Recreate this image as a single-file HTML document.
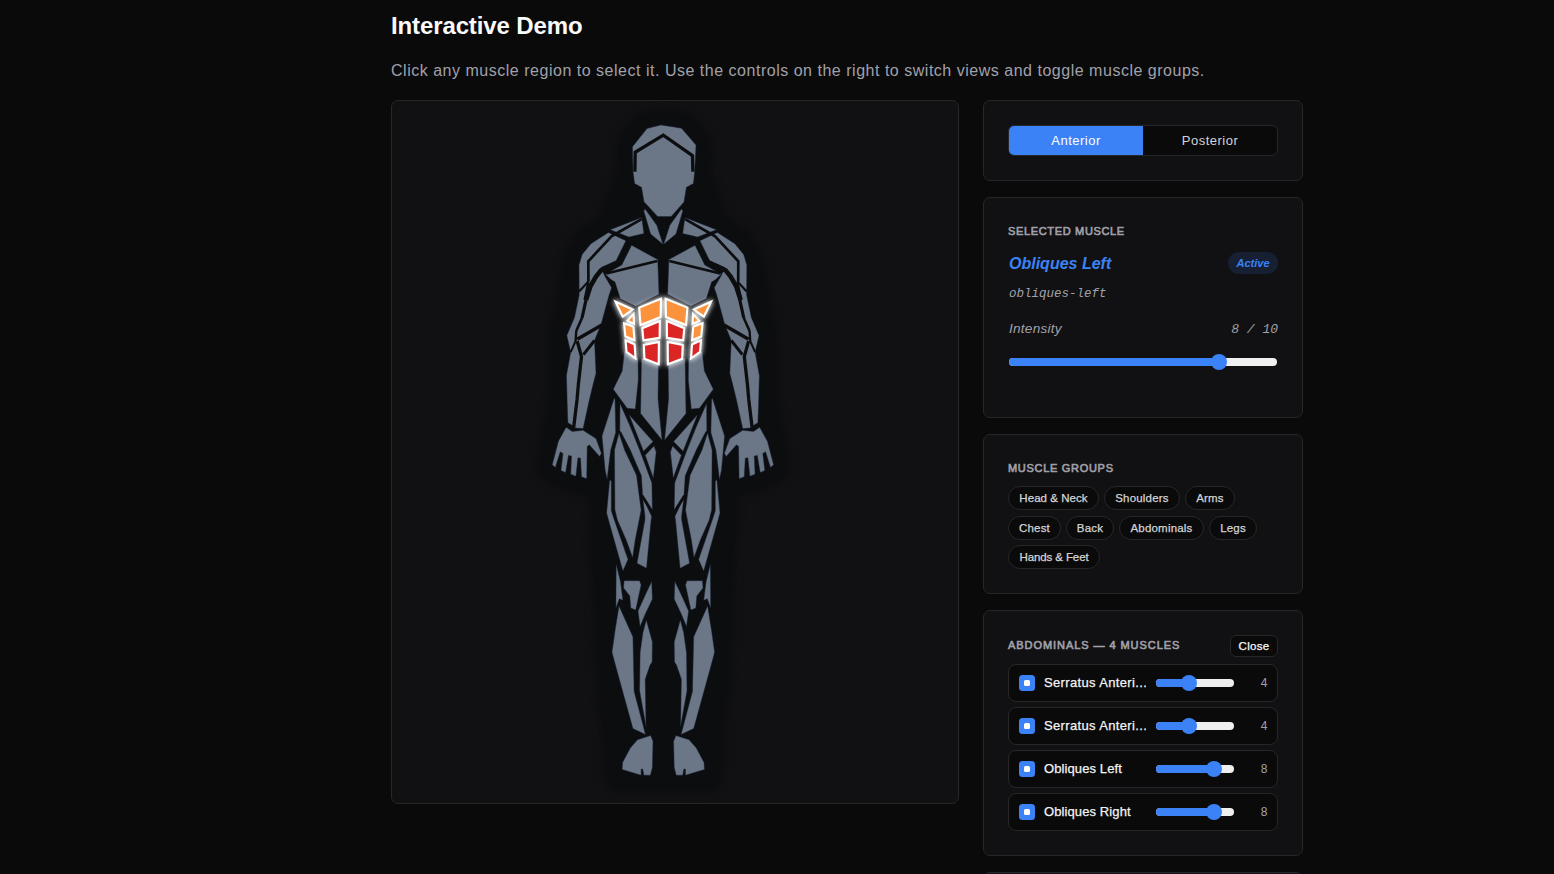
<!DOCTYPE html>
<html lang="en">
<head>
<meta charset="utf-8">
<title>Interactive Demo</title>
<style>
*{box-sizing:border-box;margin:0;padding:0}
html,body{width:1554px;height:874px;overflow:hidden;background:#0a0a0a;color:#fafafa;font-family:"Liberation Sans",sans-serif}
body{position:relative}
h2{position:absolute;left:391px;top:11px;font-size:24px;line-height:30px;font-weight:700;color:#fafafa;letter-spacing:-0.12px;white-space:nowrap}
.sub{position:absolute;left:391px;top:60px;font-size:16px;line-height:22px;color:#a1a1aa;white-space:nowrap;letter-spacing:0.515px}
.card{position:absolute;background:#111113;border:1px solid #27272a;border-radius:7px}
#viewer{left:391px;top:100px;width:568px;height:704px;overflow:hidden}
#c1{left:983px;top:100px;width:320px;height:81px}
#c2{left:983px;top:197px;width:320px;height:221px}
#c3{left:983px;top:434px;width:320px;height:160px}
#c4{left:983px;top:610px;width:320px;height:246px}
#c5{left:983px;top:872px;width:320px;height:100px}
.abs{position:absolute;white-space:nowrap}
.seg{position:absolute;left:24px;top:24px;width:270px;height:31px;border:1px solid #27272a;border-radius:6px;background:#0a0a0a;overflow:hidden}
.seg div{position:absolute;top:0;height:29px;text-align:center;font-size:13px;line-height:29px;color:#d4d4d8;letter-spacing:0.5px}
.seg .on{left:0;width:134px;background:#3b82f6;color:#fff}
.seg .off{left:134px;width:134px}
.lbl{position:absolute;left:24px;font-size:11px;font-weight:400;-webkit-text-stroke:0.6px #a1a1aa;letter-spacing:0.6px;color:#a1a1aa;white-space:nowrap;line-height:14px}
.mname{left:25px;top:253px;font-size:16px;line-height:20px;font-weight:700;font-style:italic;color:#3b82f6}
.badge{left:244px;top:54px;width:50px;height:22px;border-radius:11px;background:#172033;color:#3b82f6;font-size:11px;font-weight:700;font-style:italic;text-align:center;line-height:22px}
.mono{font-family:"Liberation Mono",monospace;font-style:italic;color:#a1a1aa}
.track{position:absolute;height:8px;border-radius:4px;background:#efefef}
.track i{position:absolute;left:0;top:0;height:8px;border-radius:4px;background:#3b82f6}
.track b{position:absolute;top:-4px;width:16px;height:16px;border-radius:50%;background:#3b82f6}
.chip{-webkit-text-stroke:0.25px #d4d4d8;position:absolute;height:24px;border:1px solid #27272a;border-radius:12px;background:#0a0a0a;color:#d4d4d8;font-size:11.5px;line-height:22px;text-align:center;white-space:nowrap;letter-spacing:0.2px}
.close{-webkit-text-stroke:0.25px #fafafa;left:246px;top:24px;width:48px;height:22px;border:1px solid #27272a;border-radius:6px;background:#0a0a0a;color:#fafafa;font-size:11.5px;line-height:20.5px;text-align:center;letter-spacing:0.3px}
.row{position:absolute;left:24px;width:270px;height:38px;border:1px solid #27272a;border-radius:8px;background:#0a0a0a}
.row .cb{position:absolute;left:10px;top:10px;width:16px;height:16px;border-radius:3.5px;background:#3b82f6}
.row .cb:after{content:"";position:absolute;left:5px;top:5px;width:6px;height:6px;border-radius:1.5px;background:#fff}
.row .nm{-webkit-text-stroke:0.25px #f4f4f5;position:absolute;left:35px;top:0;width:102px;line-height:36px;font-size:13px;color:#f4f4f5;white-space:nowrap;overflow:hidden;letter-spacing:0.35px}
.row .track{left:147px;top:14px;width:78px}
.row .num{position:absolute;left:245px;width:20px;top:0;line-height:36px;font-size:12px;color:#a1a1aa;text-align:center}
</style>
</head>
<body>
<h2>Interactive Demo</h2>
<p class="sub">Click any muscle region to select it. Use the controls on the right to switch views and toggle muscle groups.</p>
<div class="card" id="viewer"><!--FIGURE--><svg viewBox="0 0 1554 874" width="1554" height="874" style="position:absolute;left:-392px;top:-101px">
<defs><filter id="halo" color-interpolation-filters="sRGB" x="-20%" y="-10%" width="140%" height="120%"><feGaussianBlur stdDeviation="3.5"/></filter><filter id="glow" color-interpolation-filters="sRGB" x="-30%" y="-30%" width="160%" height="160%"><feGaussianBlur stdDeviation="2.6"/></filter></defs>
<g filter="url(#halo)" fill="#0c0d0f" stroke="#0c0d0f" stroke-width="34" stroke-linejoin="round">
<polygon points="661,124.9 647,128.6 632.5,146.7 633,171.8 634.6,183.5 641.5,187.3 644,201.7 657.6,216.5 671.2,216.5 684,202.1 686.4,187.3 693.4,183.5 694.7,171.8 696,145.1 681.5,128.2"/>
<polygon points="644.94,208.75 656.78,225.23 662.96,244.27 650.6,233.98 643.91,211.33"/>
<polygon points="641.03,217.71 610.24,229.65 619.2,233.15 628.98,237.07 643.91,233.46 642.06,220.08"/>
<polygon points="608.4,232.4 625.9,240.7 616.1,260.7 601,267.5 604.5,275.5 611.6,287.7 609.1,295 601.7,322.2 601.1,324 598.8,330 594.5,340.5 596,373.2 593.2,384 589.3,400 583.1,428.6 575.4,428 572,425.2 567.9,422.7 567.1,400 566.7,384 566.4,375.7 570.7,352.2 566.8,335.5 574.5,317.4 579.2,295 579,264.9 582.1,254.6 590.9,243.8"/>
<polygon points="566.11,427.28 572.28,431.4 583.1,430.37 595.97,438.61 601.42,453.33 599.57,456.42 589.27,444.79 587.21,446.54 586.7,478.76 581.55,476.71 580.52,458.17 577.95,457.66 575.89,476.19 570.74,474.13 571.56,456.11 568.47,455.39 565.59,472.59 560.96,470.53 563.02,453.54 560.24,451.79 555.3,467.44 552.21,464.86 558.38,441.18"/>
<polygon points="631.6,245.3 657.7,259.5 659,294.3 635.6,306.3 620.2,298.6 615,282.1 611,279.6 605.4,274.2 621.8,264.9"/>
<polygon points="624.5,351 622.2,371 613.3,389.3 627.2,408.3 635.3,409 638.3,380 638,358 632,355"/>
<polygon points="641.5,358 658.5,362 658,398.5 662,440 640.6,413.5"/>
<polygon points="614.1,398.5 602,436.1 605.1,470 607.1,479.3 610.7,450 615.7,432.5 615,399"/>
<polygon points="609.7,479.9 606.6,512.8 608.5,520 622.9,571 628,559.6 614.3,520 611.3,510.7 611.3,481"/>
<polygon points="619,433 624.6,450 636.5,475.2 641.1,510.2 635.2,540 632.6,557.6 626.2,540 617.4,520 614.9,509.7 614.5,450"/>
<polygon points="620,403.5 619.8,430.7 621,432 630.3,450 641.4,475.7 642.7,496.3 652.4,510.7 651.9,482.9 640,451 630,426"/>
<polygon points="629.1,414.8 653,441.6 643.5,451.2"/>
<polygon points="645.2,455.2 654,445.9 656.2,452 653.3,478"/>
<polygon points="642.7,497.4 651.7,516.4 651.1,520 646.5,568.2 637,563.2 644.9,520 645,516.4"/>
<polygon points="616.2,564.3 620.5,581.8 622.9,600.3 619.3,598.8 615.9,608"/>
<polygon points="624.1,580.7 639.6,580.7 641.1,584.9 635.7,610.1 630.8,608 629.8,596 623.6,588"/>
<polygon points="651.7,581.6 652.4,599 645.2,614.2 640.1,626.6 638,611.1 646.6,592.1"/>
<polygon points="619,606 632.9,636.8 633.9,680 634.1,691.3 645.5,734.5 632.9,728.6 615.4,665 612,652.3 615.1,630.2"/>
<polygon points="646.3,619.9 652.4,642 652.1,662.1 650.1,665 645.2,679.2 646,726.3 639.6,690.7 640.1,652.8 642.9,632.7"/>
<polygon points="650.7,735.6 653,741.3 652.4,767.5 650.4,775.2 643.9,775.2 642.7,769.1 641.1,769.1 641.1,775.2 622.1,769.4 622.6,762.4 630.3,747.9 637.5,739.7"/>
<polygon points="681.66,208.75 669.82,225.23 663.64,244.27 676.0,233.98 682.69,211.33"/>
<polygon points="685.57,217.71 716.36,229.65 707.4,233.15 697.62,237.07 682.69,233.46 684.54,220.08"/>
<polygon points="717.4,232.4 699.9,240.7 709.7,260.7 724.8,267.5 721.3,275.5 714.2,287.7 716.7,295 724.1,322.2 724.7,324 727.0,330 731.3,340.5 729.8,373.2 732.6,384 736.5,400 742.7,428.6 750.4,428 753.8,425.2 757.9,422.7 758.7,400 759.1,384 759.4,375.7 755.1,352.2 759.0,335.5 751.3,317.4 746.6,295 746.8,264.9 743.7,254.6 734.9,243.8"/>
<polygon points="759.69,427.28 753.52,431.4 742.7,430.37 729.83,438.61 724.38,453.33 726.23,456.42 736.53,444.79 738.59,446.54 739.1,478.76 744.25,476.71 745.28,458.17 747.85,457.66 749.91,476.19 755.06,474.13 754.24,456.11 757.33,455.39 760.21,472.59 764.84,470.53 762.78,453.54 765.56,451.79 770.5,467.44 773.59,464.86 767.42,441.18"/>
<polygon points="695.0,245.3 668.9,259.5 667.6,294.3 691.0,306.3 706.4,298.6 711.6,282.1 715.6,279.6 721.2,274.2 704.8,264.9"/>
<polygon points="702.1,351 704.4,371 713.3,389.3 699.4,408.3 691.3,409 688.3,380 688.6,358 694.6,355"/>
<polygon points="685.1,358 668.1,362 668.6,398.5 664.6,440 686.0,413.5"/>
<polygon points="712.5,398.5 724.6,436.1 721.5,470 719.5,479.3 715.9,450 710.9,432.5 711.6,399"/>
<polygon points="716.9,479.9 720.0,512.8 718.1,520 703.7,571 698.6,559.6 712.3,520 715.3,510.7 715.3,481"/>
<polygon points="707.6,433 702.0,450 690.1,475.2 685.5,510.2 691.4,540 694.0,557.6 700.4,540 709.2,520 711.7,509.7 712.1,450"/>
<polygon points="706.6,403.5 706.8,430.7 705.6,432 696.3,450 685.2,475.7 683.9,496.3 674.2,510.7 674.7,482.9 686.6,451 696.6,426"/>
<polygon points="697.5,414.8 673.6,441.6 683.1,451.2"/>
<polygon points="681.4,455.2 672.6,445.9 670.4,452 673.3,478"/>
<polygon points="683.9,497.4 674.9,516.4 675.5,520 680.1,568.2 689.6,563.2 681.7,520 681.6,516.4"/>
<polygon points="710.4,564.3 706.1,581.8 703.7,600.3 707.3,598.8 710.7,608"/>
<polygon points="702.5,580.7 687.0,580.7 685.5,584.9 690.9,610.1 695.8,608 696.8,596 703.0,588"/>
<polygon points="674.9,581.6 674.2,599 681.4,614.2 686.5,626.6 688.6,611.1 680.0,592.1"/>
<polygon points="707.6,606 693.7,636.8 692.7,680 692.5,691.3 681.1,734.5 693.7,728.6 711.2,665 714.6,652.3 711.5,630.2"/>
<polygon points="680.3,619.9 674.2,642 674.5,662.1 676.5,665 681.4,679.2 680.6,726.3 687.0,690.7 686.5,652.8 683.7,632.7"/>
<polygon points="675.9,735.6 673.6,741.3 674.2,767.5 676.2,775.2 682.7,775.2 683.9,769.1 685.5,769.1 685.5,775.2 704.5,769.4 704.0,762.4 696.3,747.9 689.1,739.7"/>
<polygon points="602,436 606,520 612,652 620,775 706.6,775 714.6,652 720.6,520 724.6,436"/>
<polygon points="634,175 611,229 591,243 663,255"/>
<polygon points="692.6,175 715.6,229 735.6,243 663.6,255"/>
<polygon points="590,243 579,265 566,335 566,400 552,465 587,479 601,453 596,373 612,288 626,241"/>
<polygon points="736.6,243 747.6,265 760.6,335 760.6,400 774.6,465 739.6,479 725.6,453 730.6,373 714.6,288 700.6,241"/>
</g>
<polygon points="645,208 641,218 610.5,229.7 590.9,243.8 582.1,254.6 579,264.9 579.2,295 574.5,317.4 566.8,335.5 570.7,352.2 566.4,375.7 567.1,400 567.9,422.7 566.1,427.3 558.4,441.2 552.2,464.9 586.7,478.8 601.4,453.3 602,436.1 605,470 606.6,512.8 608.5,520 616.2,564 615.9,608 615.1,630 612,652 615.4,665 632.9,728.6 630.3,747.9 622.6,762.4 622.1,769.4 641.1,775.2 650.4,775.2 676.2,775.2 685.5,775.2 704.5,769.4 704.0,762.4 696.3,747.9 693.7,728.6 711.2,665 714.6,652 711.5,630 710.7,608 710.4,564 718.1,520 720.0,512.8 721.6,470 724.6,436.1 725.2,453.3 739.9,478.8 774.4,464.9 768.2,441.2 760.5,427.3 758.7,422.7 759.5,400 760.2,375.7 755.9,352.2 759.8,335.5 752.1,317.4 747.4,295 747.6,264.9 744.5,254.6 735.7,243.8 716.1,229.7 685.6,218 681.6,208" fill="#0c0d0f"/>
<g fill="#6b7686" stroke="#17233a" stroke-width="0.45">
<polygon points="661,124.9 647,128.6 632.5,146.7 633,171.8 634.6,183.5 641.5,187.3 644,201.7 657.6,216.5 671.2,216.5 684,202.1 686.4,187.3 693.4,183.5 694.7,171.8 696,145.1 681.5,128.2"/>
<polygon points="644.94,208.75 656.78,225.23 662.96,244.27 650.6,233.98 643.91,211.33"/>
<polygon points="641.03,217.71 610.24,229.65 619.2,233.15 628.98,237.07 643.91,233.46 642.06,220.08"/>
<polygon points="608.4,232.4 625.9,240.7 616.1,260.7 601,267.5 604.5,275.5 611.6,287.7 609.1,295 601.7,322.2 601.1,324 598.8,330 594.5,340.5 596,373.2 593.2,384 589.3,400 583.1,428.6 575.4,428 572,425.2 567.9,422.7 567.1,400 566.7,384 566.4,375.7 570.7,352.2 566.8,335.5 574.5,317.4 579.2,295 579,264.9 582.1,254.6 590.9,243.8"/>
<polygon points="566.11,427.28 572.28,431.4 583.1,430.37 595.97,438.61 601.42,453.33 599.57,456.42 589.27,444.79 587.21,446.54 586.7,478.76 581.55,476.71 580.52,458.17 577.95,457.66 575.89,476.19 570.74,474.13 571.56,456.11 568.47,455.39 565.59,472.59 560.96,470.53 563.02,453.54 560.24,451.79 555.3,467.44 552.21,464.86 558.38,441.18"/>
<polygon points="631.6,245.3 657.7,259.5 659,294.3 635.6,306.3 620.2,298.6 615,282.1 611,279.6 605.4,274.2 621.8,264.9"/>
<polygon points="624.5,351 622.2,371 613.3,389.3 627.2,408.3 635.3,409 638.3,380 638,358 632,355"/>
<polygon points="641.5,358 658.5,362 658,398.5 662,440 640.6,413.5"/>
<polygon points="614.1,398.5 602,436.1 605.1,470 607.1,479.3 610.7,450 615.7,432.5 615,399"/>
<polygon points="609.7,479.9 606.6,512.8 608.5,520 622.9,571 628,559.6 614.3,520 611.3,510.7 611.3,481"/>
<polygon points="619,433 624.6,450 636.5,475.2 641.1,510.2 635.2,540 632.6,557.6 626.2,540 617.4,520 614.9,509.7 614.5,450"/>
<polygon points="620,403.5 619.8,430.7 621,432 630.3,450 641.4,475.7 642.7,496.3 652.4,510.7 651.9,482.9 640,451 630,426"/>
<polygon points="629.1,414.8 653,441.6 643.5,451.2"/>
<polygon points="645.2,455.2 654,445.9 656.2,452 653.3,478"/>
<polygon points="642.7,497.4 651.7,516.4 651.1,520 646.5,568.2 637,563.2 644.9,520 645,516.4"/>
<polygon points="616.2,564.3 620.5,581.8 622.9,600.3 619.3,598.8 615.9,608"/>
<polygon points="624.1,580.7 639.6,580.7 641.1,584.9 635.7,610.1 630.8,608 629.8,596 623.6,588"/>
<polygon points="651.7,581.6 652.4,599 645.2,614.2 640.1,626.6 638,611.1 646.6,592.1"/>
<polygon points="619,606 632.9,636.8 633.9,680 634.1,691.3 645.5,734.5 632.9,728.6 615.4,665 612,652.3 615.1,630.2"/>
<polygon points="646.3,619.9 652.4,642 652.1,662.1 650.1,665 645.2,679.2 646,726.3 639.6,690.7 640.1,652.8 642.9,632.7"/>
<polygon points="650.7,735.6 653,741.3 652.4,767.5 650.4,775.2 643.9,775.2 642.7,769.1 641.1,769.1 641.1,775.2 622.1,769.4 622.6,762.4 630.3,747.9 637.5,739.7"/>
<polygon points="681.66,208.75 669.82,225.23 663.64,244.27 676.0,233.98 682.69,211.33"/>
<polygon points="685.57,217.71 716.36,229.65 707.4,233.15 697.62,237.07 682.69,233.46 684.54,220.08"/>
<polygon points="717.4,232.4 699.9,240.7 709.7,260.7 724.8,267.5 721.3,275.5 714.2,287.7 716.7,295 724.1,322.2 724.7,324 727.0,330 731.3,340.5 729.8,373.2 732.6,384 736.5,400 742.7,428.6 750.4,428 753.8,425.2 757.9,422.7 758.7,400 759.1,384 759.4,375.7 755.1,352.2 759.0,335.5 751.3,317.4 746.6,295 746.8,264.9 743.7,254.6 734.9,243.8"/>
<polygon points="759.69,427.28 753.52,431.4 742.7,430.37 729.83,438.61 724.38,453.33 726.23,456.42 736.53,444.79 738.59,446.54 739.1,478.76 744.25,476.71 745.28,458.17 747.85,457.66 749.91,476.19 755.06,474.13 754.24,456.11 757.33,455.39 760.21,472.59 764.84,470.53 762.78,453.54 765.56,451.79 770.5,467.44 773.59,464.86 767.42,441.18"/>
<polygon points="695.0,245.3 668.9,259.5 667.6,294.3 691.0,306.3 706.4,298.6 711.6,282.1 715.6,279.6 721.2,274.2 704.8,264.9"/>
<polygon points="702.1,351 704.4,371 713.3,389.3 699.4,408.3 691.3,409 688.3,380 688.6,358 694.6,355"/>
<polygon points="685.1,358 668.1,362 668.6,398.5 664.6,440 686.0,413.5"/>
<polygon points="712.5,398.5 724.6,436.1 721.5,470 719.5,479.3 715.9,450 710.9,432.5 711.6,399"/>
<polygon points="716.9,479.9 720.0,512.8 718.1,520 703.7,571 698.6,559.6 712.3,520 715.3,510.7 715.3,481"/>
<polygon points="707.6,433 702.0,450 690.1,475.2 685.5,510.2 691.4,540 694.0,557.6 700.4,540 709.2,520 711.7,509.7 712.1,450"/>
<polygon points="706.6,403.5 706.8,430.7 705.6,432 696.3,450 685.2,475.7 683.9,496.3 674.2,510.7 674.7,482.9 686.6,451 696.6,426"/>
<polygon points="697.5,414.8 673.6,441.6 683.1,451.2"/>
<polygon points="681.4,455.2 672.6,445.9 670.4,452 673.3,478"/>
<polygon points="683.9,497.4 674.9,516.4 675.5,520 680.1,568.2 689.6,563.2 681.7,520 681.6,516.4"/>
<polygon points="710.4,564.3 706.1,581.8 703.7,600.3 707.3,598.8 710.7,608"/>
<polygon points="702.5,580.7 687.0,580.7 685.5,584.9 690.9,610.1 695.8,608 696.8,596 703.0,588"/>
<polygon points="674.9,581.6 674.2,599 681.4,614.2 686.5,626.6 688.6,611.1 680.0,592.1"/>
<polygon points="707.6,606 693.7,636.8 692.7,680 692.5,691.3 681.1,734.5 693.7,728.6 711.2,665 714.6,652.3 711.5,630.2"/>
<polygon points="680.3,619.9 674.2,642 674.5,662.1 676.5,665 681.4,679.2 680.6,726.3 687.0,690.7 686.5,652.8 683.7,632.7"/>
<polygon points="675.9,735.6 673.6,741.3 674.2,767.5 676.2,775.2 682.7,775.2 683.9,769.1 685.5,769.1 685.5,775.2 704.5,769.4 704.0,762.4 696.3,747.9 689.1,739.7"/>
</g>
<g fill="none" stroke="#0c0d0f" stroke-linecap="butt" stroke-linejoin="miter">
<polyline points="634.9,171.8 635.2,152.3 663.3,135.2 692.5,155.6 692.9,171.8" stroke-width="3.3"/>
<polyline points="641.54,219.15 617.66,232.74 611.48,236.24 588.31,261.26 588.4,281.6" stroke-width="2.7"/>
<polyline points="685.06,219.15 708.94,232.74 715.12,236.24 738.29,261.26 738.2,281.6" stroke-width="2.7"/>
<polyline points="588.4,281.6 579.1,291.4" stroke-width="2.2"/>
<polyline points="737.4,281.6 746.7,291.4" stroke-width="2.2"/>
<polyline points="588.4,281.6 584.5,300" stroke-width="2.2"/>
<polyline points="737.4,281.6 741.3,300" stroke-width="2.2"/>
<polyline points="618.5,262.3 601,270.3 596,276.5 590.5,286 586,300" stroke-width="4.6"/>
<polyline points="708.1,262.3 725.6,270.3 730.6,276.5 736.1,286 740.6,300" stroke-width="4.6"/>
<polyline points="586,300 582,318" stroke-width="3.2"/>
<polyline points="739.8,300 743.8,318" stroke-width="3.2"/>
<polyline points="582,318 576.2,331" stroke-width="2.6"/>
<polyline points="743.8,318 749.6,331" stroke-width="2.6"/>
<polyline points="576.2,331 575.6,341" stroke-width="2.3"/>
<polyline points="749.6,331 750.2,341" stroke-width="2.3"/>
<polyline points="575.6,341 570.7,352.2" stroke-width="2"/>
<polyline points="750.2,341 755.1,352.2" stroke-width="2"/>
<polyline points="601.8,325 577.2,339.2" stroke-width="3.5"/>
<polyline points="724.0,325 748.6,339.2" stroke-width="3.5"/>
<polyline points="577.2,341.1 581.5,356.6 578.4,384 577,400 573.6,428" stroke-width="3.3"/>
<polyline points="748.6,341.1 744.3,356.6 747.4,384 748.8,400 752.2,428" stroke-width="3.3"/>
<polyline points="594.5,340.5 583.4,354.7" stroke-width="3"/>
<polyline points="731.3,340.5 742.4,354.7" stroke-width="3"/>
<polyline points="606.3,273.6 657.3,261.1" stroke-width="2.6"/>
<polyline points="720.3,273.6 669.3,261.1" stroke-width="2.6"/>
<polyline points="642.1,495.8 653.2,513.6" stroke-width="2.8"/>
<polyline points="684.5,495.8 673.4,513.6" stroke-width="2.8"/>
</g>
<g filter="url(#glow)" fill="#fff" stroke="#fff" stroke-width="3.9" stroke-linejoin="round" opacity="0.9">
<polygon points="639.22,307.65 660.95,298.9 660.64,316.92 640.56,324.95"/>
<polygon points="642.31,328.25 659.81,321.04 659.61,337.83 643.44,340.4"/>
<polygon points="643.85,345.04 658.89,342.05 658.68,364.29 644.47,358.73"/>
<polygon points="615.53,301.68 632.63,309.51 622.74,316.72"/>
<polygon points="627.48,320.63 633.55,314.14 633.97,323.82"/>
<polygon points="624.08,323.31 633.35,326.71 634.48,340.09 625.42,336.49"/>
<polygon points="625.62,340.4 634.58,344.42 635.51,358.32 626.55,351.93"/>
<polygon points="687.38,307.65 665.65,298.9 665.96,316.92 686.04,324.95"/>
<polygon points="684.29,328.25 666.79,321.04 666.99,337.83 683.16,340.4"/>
<polygon points="682.75,345.04 667.71,342.05 667.92,364.29 682.13,358.73"/>
<polygon points="711.07,301.68 693.97,309.51 703.86,316.72"/>
<polygon points="699.12,320.63 693.05,314.14 692.63,323.82"/>
<polygon points="702.52,323.31 693.25,326.71 692.12,340.09 701.18,336.49"/>
<polygon points="700.98,340.4 692.02,344.42 691.09,358.32 700.05,351.93"/>
</g>
<g stroke="#fff" stroke-width="2.1" stroke-linejoin="miter">
<polygon points="639.22,307.65 660.95,298.9 660.64,316.92 640.56,324.95" fill="#fb923c"/>
<polygon points="642.31,328.25 659.81,321.04 659.61,337.83 643.44,340.4" fill="#dc2626"/>
<polygon points="643.85,345.04 658.89,342.05 658.68,364.29 644.47,358.73" fill="#dc2626"/>
<polygon points="615.53,301.68 632.63,309.51 622.74,316.72" fill="#fb923c"/>
<polygon points="627.48,320.63 633.55,314.14 633.97,323.82" fill="#fb923c"/>
<polygon points="624.08,323.31 633.35,326.71 634.48,340.09 625.42,336.49" fill="#fb923c"/>
<polygon points="625.62,340.4 634.58,344.42 635.51,358.32 626.55,351.93" fill="#dc2626"/>
<polygon points="687.38,307.65 665.65,298.9 665.96,316.92 686.04,324.95" fill="#fb923c"/>
<polygon points="684.29,328.25 666.79,321.04 666.99,337.83 683.16,340.4" fill="#dc2626"/>
<polygon points="682.75,345.04 667.71,342.05 667.92,364.29 682.13,358.73" fill="#dc2626"/>
<polygon points="711.07,301.68 693.97,309.51 703.86,316.72" fill="#fb923c"/>
<polygon points="699.12,320.63 693.05,314.14 692.63,323.82" fill="#fb923c"/>
<polygon points="702.52,323.31 693.25,326.71 692.12,340.09 701.18,336.49" fill="#fb923c"/>
<polygon points="700.98,340.4 692.02,344.42 691.09,358.32 700.05,351.93" fill="#dc2626"/>
</g>
</svg><!--/FIGURE--></div>
<div class="card" id="c1">
  <div class="seg"><div class="on">Anterior</div><div class="off">Posterior</div></div>
</div>
<div class="card" id="c2">
  <div class="lbl" style="top:26px;letter-spacing:0.66px">SELECTED MUSCLE</div>
  <div class="abs mname" style="left:25px;top:56px">Obliques Left</div>
  <div class="abs badge">Active</div>
  <div class="abs mono" style="left:25px;top:88px;font-size:12.5px;line-height:16px">obliques-left</div>
  <div class="abs" style="left:25px;top:121.5px;font-size:13.6px;line-height:18px;font-style:italic;color:#a1a1aa;letter-spacing:0.25px">Intensity</div>
  <div class="abs mono" style="right:24px;top:123px;font-size:13px;line-height:18px">8 / 10</div>
  <div class="track" style="left:25px;top:160px;width:268px"><i style="width:215px"></i><b style="left:201.6px"></b></div>
</div>
<div class="card" id="c3">
  <div class="lbl" style="top:26px;letter-spacing:0.7px">MUSCLE GROUPS</div>
  <div class="chip" style="left:24px;top:51px;width:91px;letter-spacing:0.05px">Head &amp; Neck</div>
  <div class="chip" style="left:120px;top:51px;width:76px">Shoulders</div>
  <div class="chip" style="left:201px;top:51px;width:50px">Arms</div>
  <div class="chip" style="left:24px;top:81px;width:53px">Chest</div>
  <div class="chip" style="left:82px;top:81px;width:48px">Back</div>
  <div class="chip" style="left:135px;top:81px;width:85px">Abdominals</div>
  <div class="chip" style="left:225px;top:81px;width:48px">Legs</div>
  <div class="chip" style="left:24px;top:110px;width:92px;letter-spacing:-0.1px">Hands &amp; Feet</div>
</div>
<div class="card" id="c4">
  <div class="lbl" style="top:27px;letter-spacing:0.94px">ABDOMINALS — 4 MUSCLES</div>
  <div class="abs close">Close</div>
  <div class="row" style="top:53px"><span class="cb"></span><span class="nm">Serratus Anteri...</span><div class="track"><i style="width:40px"></i><b style="left:24.8px"></b></div><span class="num">4</span></div>
  <div class="row" style="top:96px"><span class="cb"></span><span class="nm">Serratus Anteri...</span><div class="track"><i style="width:40px"></i><b style="left:24.8px"></b></div><span class="num">4</span></div>
  <div class="row" style="top:139px"><span class="cb"></span><span class="nm" style="letter-spacing:0.1px">Obliques Left</span><div class="track"><i style="width:64px"></i><b style="left:49.6px"></b></div><span class="num">8</span></div>
  <div class="row" style="top:182px"><span class="cb"></span><span class="nm" style="letter-spacing:0.1px">Obliques Right</span><div class="track"><i style="width:64px"></i><b style="left:49.6px"></b></div><span class="num">8</span></div>
</div>
<div class="card" id="c5"></div>
</body>
</html>
